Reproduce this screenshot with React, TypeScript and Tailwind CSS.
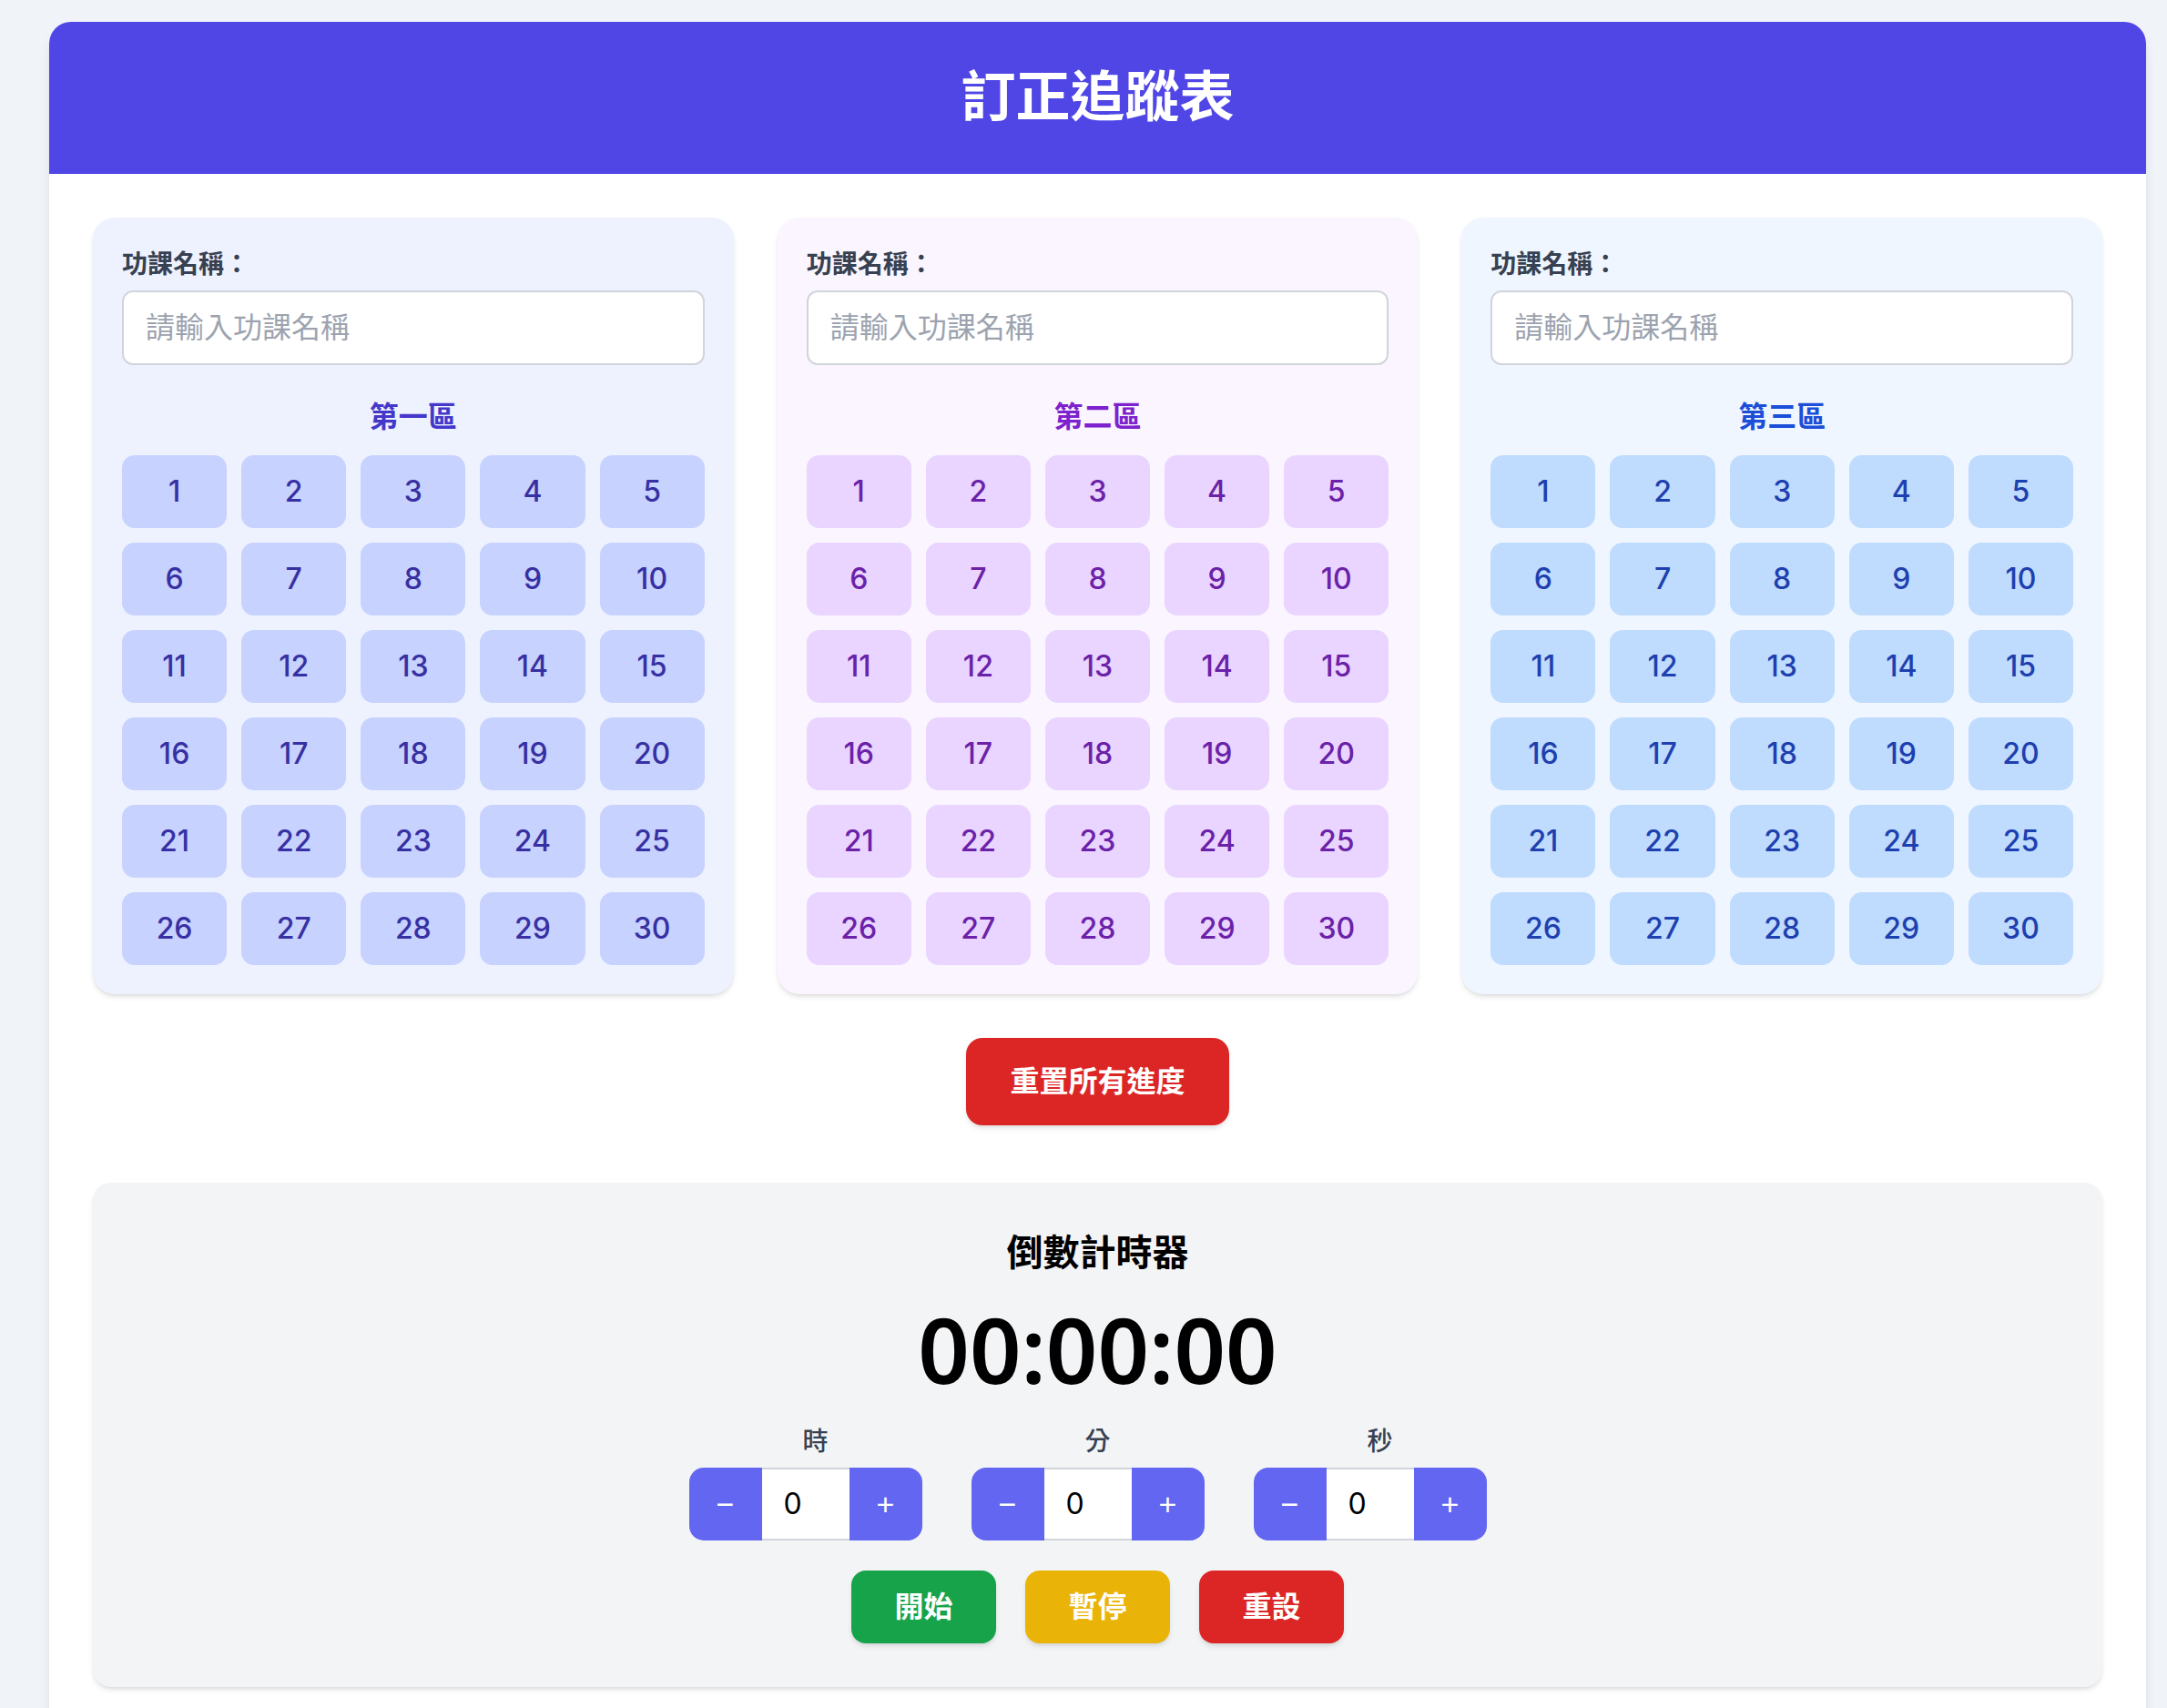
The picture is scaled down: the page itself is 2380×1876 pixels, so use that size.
import { useState } from 'react';

const SECTIONS = [
  {
    title: '第一區',
    panel: 'bg-[#eef2ff]',
    heading: 'text-[#4338ca]',
    cell: 'bg-[#c7d2fe] text-[#3730a3]',
  },
  {
    title: '第二區',
    panel: 'bg-[#faf5ff]',
    heading: 'text-[#7e22ce]',
    cell: 'bg-[#e9d5ff] text-[#6b21a8]',
  },
  {
    title: '第三區',
    panel: 'bg-[#eff6ff]',
    heading: 'text-[#1d4ed8]',
    cell: 'bg-[#bfdbfe] text-[#1e40af]',
  },
];

const NUMBERS = Array.from({ length: 30 }, (_, i) => i + 1);

function Section({ section }: { section: (typeof SECTIONS)[number] }) {
  const [name, setName] = useState('');
  return (
    <div className={`${section.panel} rounded-[24px] p-[32px] shadow-md`}>
      <label className="block text-[28px] leading-[40px] font-semibold text-[#374151] mb-[8px]">
        功課名稱：
      </label>
      <input
        type="text"
        value={name}
        onChange={(e) => setName(e.target.value)}
        placeholder="請輸入功課名稱"
        className="w-full h-[82px] px-[24px] bg-white border-2 border-[#d1d5db] rounded-[12px] text-[32px] text-[#111827] placeholder:text-[#9ca3af] focus:outline-none"
      />
      <h3 className={`mt-[33px] mb-[18px] text-center text-[32px] leading-[48px] font-bold ${section.heading}`}>
        {section.title}
      </h3>
      <div className="grid grid-cols-5 gap-[16px]">
        {NUMBERS.map((n) => (
          <button
            key={n}
            className={`h-[80px] rounded-[14px] flex items-center justify-center text-[32px] font-medium font-['Inter',sans-serif] ${section.cell}`}
          >
            {n}
          </button>
        ))}
      </div>
    </div>
  );
}

function Spinner({ label }: { label: string }) {
  return (
    <div className="w-[278px] flex flex-col items-start">
      <span className="block w-full text-center text-[28px] leading-[40px] font-medium text-[#374151] mb-[8px]">
        {label}
      </span>
      <div className="flex h-[80px]">
        <button className="w-[80px] bg-[#6366f1] text-white rounded-l-[16px] text-[34px] flex items-center justify-center">
          −
        </button>
        <input
          type="text"
          defaultValue="0"
          className="w-[96px] bg-white border-y-2 border-[#d1d5db] px-[24px] text-[32px] text-black font-['Inter',sans-serif] focus:outline-none"
        />
        <button className="w-[80px] bg-[#6366f1] text-white rounded-r-[16px] text-[34px] flex items-center justify-center">
          +
        </button>
      </div>
    </div>
  );
}

export default function App() {
  return (
    <div className="min-h-screen bg-[#f0f4f8] pt-[24px] pl-[54px] pr-[23px] font-['Liberation_Sans','Noto_Sans_CJK_TC',sans-serif]">
      <div className="bg-white rounded-[24px] shadow-lg overflow-hidden">
        <header className="h-[167px] bg-[#4f46e5] flex items-center justify-center">
          <h1 className="text-white text-[60px] leading-none font-bold">訂正追蹤表</h1>
        </header>

        <div className="p-[48px]">
          <div className="grid grid-cols-3 gap-[48px]">
            {SECTIONS.map((s) => (
              <Section key={s.title} section={s} />
            ))}
          </div>

          <div className="flex justify-center mt-[48px]">
            <button className="h-[96px] px-[48px] bg-[#dc2626] text-white text-[32px] font-bold rounded-[18px] shadow-md">
              重置所有進度
            </button>
          </div>

          <div className="mt-[63px] bg-[#f3f4f6] rounded-[20px] shadow-md pt-[49px] pb-[48px] px-[48px] flex flex-col items-center">
            <h2 className="text-[40px] leading-[56px] font-bold text-black">倒數計時器</h2>
            <div className="mt-[28px] text-[99px] leading-none font-semibold text-black font-['Noto_Sans',sans-serif]">
              00:00:00
            </div>
            <div className="mt-[33px] flex gap-[32px]">
              <Spinner label="時" />
              <Spinner label="分" />
              <Spinner label="秒" />
            </div>
            <div className="mt-[33px] flex gap-[32px]">
              <button className="w-[159px] h-[80px] bg-[#16a34a] text-white text-[32px] font-bold rounded-[16px] shadow-md">
                開始
              </button>
              <button className="w-[159px] h-[80px] bg-[#eab308] text-white text-[32px] font-bold rounded-[16px] shadow-md">
                暫停
              </button>
              <button className="w-[159px] h-[80px] bg-[#dc2626] text-white text-[32px] font-bold rounded-[16px] shadow-md">
                重設
              </button>
            </div>
          </div>
        </div>
      </div>
    </div>
  );
}
